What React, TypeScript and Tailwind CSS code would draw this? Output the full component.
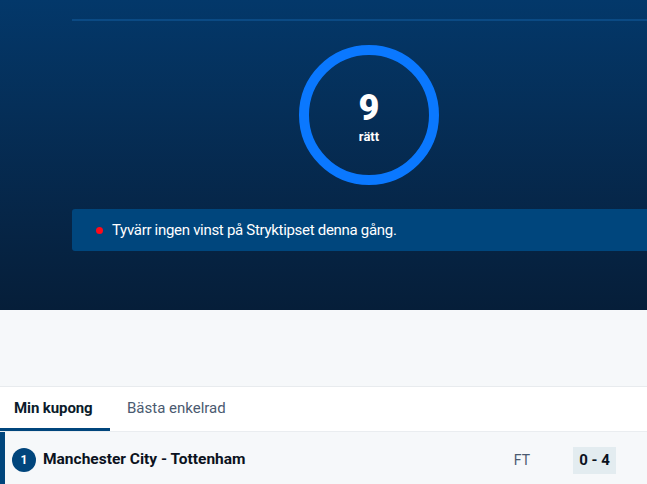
import React from "react";

export default function App() {
  return (
    <div className="w-[647px] h-[484px] overflow-hidden bg-white" style={{ fontFamily: "Roboto, 'Noto Sans', sans-serif" }}>
      <div className="h-[310px] bg-gradient-to-b from-[#03386a] to-[#061e39] pt-[19px] flex flex-col">
        <div className="ml-[72px] h-[2px] bg-[#0b4a84]" />
        <div className="ml-[72px] w-[594px] flex justify-center mt-[24px] shrink-0">
          <div className="w-[140px] h-[140px] rounded-full border-[10px] border-[#0a78ff] flex flex-col items-center justify-center">
            <div className="text-white font-black text-[36px] leading-[42px]">9</div>
            <div className="text-white font-bold text-[13px] leading-[15px]">rätt</div>
          </div>
        </div>
        <div className="ml-[72px] mt-[24px] h-[42px] bg-[#00467d] rounded-l-[3px] flex items-center pl-[24px]">
          <div className="w-[7px] h-[7px] rounded-full bg-[#ff0a1a]" />
          <div className="ml-[9px] text-white text-[15px] leading-none tracking-[-0.3px]">Tyvärr ingen vinst på Stryktipset denna gång.</div>
        </div>
      </div>
      <div className="h-[77px] bg-[#f6f8fa] border-b border-[#e8ebee]" />
      <div className="h-[45px] bg-white flex items-stretch border-b border-[#eaedf0]">
        <div className="w-[110px] flex items-center pl-[14px] border-b-[3px] border-[#00457c] text-[15px] font-bold text-[#0b1b2b] pt-[2px] tracking-[-0.1px]">Min kupong</div>
        <div className="flex items-center pl-[17px] text-[15px] text-[#4a5a70] pb-[1px]">Bästa enkelrad</div>
      </div>
      <div className="h-[56px] bg-[#f6f8fa] border-l-[5px] border-[#00457c] flex items-center">
        <div className="ml-[7px] w-[24px] h-[24px] rounded-full bg-[#00457c] text-white text-[12px] font-bold flex items-center justify-center">1</div>
        <div className="ml-[7px] text-[15.5px] font-bold text-[#0b1220]">Manchester City - Tottenham</div>
        <div className="ml-auto text-[14px] text-[#4a5a70]">FT</div>
        <div className="ml-[43px] mr-[31px] w-[43px] h-[27px] bg-[#e3ecf0] flex items-center justify-center text-[15px] font-bold text-[#0b1220]">0 - 4</div>
      </div>
    </div>
  );
}
